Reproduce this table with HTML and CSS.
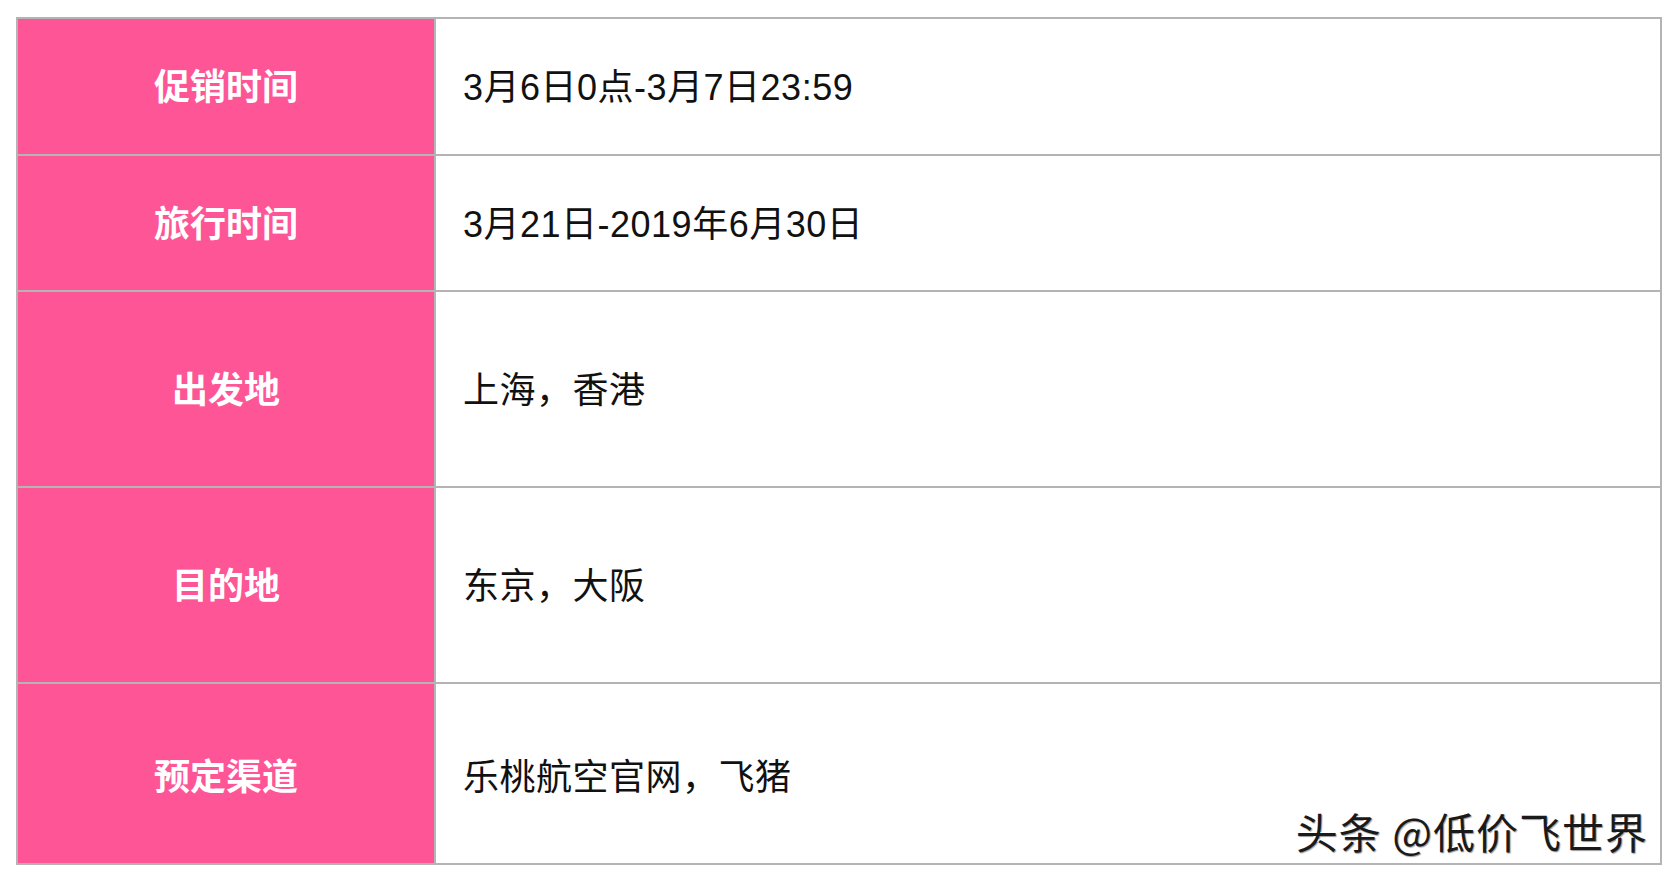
FILE: index.html
```html
<!DOCTYPE html>
<html lang="zh-CN">
<head>
<meta charset="utf-8">
<title>促销信息</title>
<link rel="stylesheet" href="styles.css">
</head>
<body>
<div class="sheet">
  <div class="grid">
    <div class="label">促销时间</div>
    <div class="value">3月6日0点-3月7日23:59</div>
    <div class="label">旅行时间</div>
    <div class="value">3月21日-2019年6月30日</div>
    <div class="label">出发地</div>
    <div class="value">上海，香港</div>
    <div class="label">目的地</div>
    <div class="value">东京，大阪</div>
    <div class="label last">预定渠道</div>
    <div class="value last">乐桃航空官网，飞猪</div>
  </div>
  <div class="watermark">头条 @低价飞世界</div>
</div>
</body>
</html>
```
FILE: styles.css
```css
html, body {
  margin: 0;
  padding: 0;
  background: #ffffff;
}
body {
  font-family: "Liberation Sans", "Noto Sans CJK SC", sans-serif;
}
.sheet {
  position: relative;
  width: 1646px;
  margin: 17px 0 0 16px;
}
.grid {
  display: grid;
  grid-template-columns: 416px 1224px;
  grid-template-rows: 135px 134px 194px 194px 179px;
  gap: 2px;
  padding: 2px;
  background: #b4b4b4;
}
.label {
  background: #fe5596;
  color: #ffffff;
  font-size: 36px;
  font-weight: 700;
  display: flex;
  align-items: center;
  justify-content: center;
  padding-bottom: 5px;
  font-family: "Noto Sans CJK SC", sans-serif;
}
.value {
  background: #ffffff;
  color: #111111;
  font-size: 36px;
  letter-spacing: 0.5px;
  display: flex;
  align-items: center;
  padding-left: 27px;
  padding-bottom: 5px;
}
.last {
  padding-bottom: 0;
}
.watermark {
  position: absolute;
  right: 14px;
  bottom: 13px;
  font-family: "Noto Sans CJK SC", sans-serif;
  font-size: 42px;
  letter-spacing: 1px;
  line-height: 1;
  color: #1a1a1a;
  text-shadow: -2px -1px 0 #ffffff, 1px 1px 1px rgba(0,0,0,0.4);
}
```
